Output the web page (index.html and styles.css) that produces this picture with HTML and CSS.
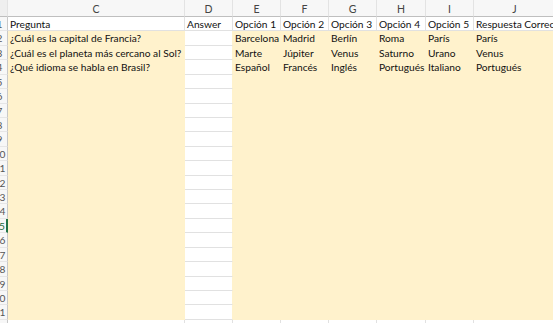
FILE: index.html
```html
<!DOCTYPE html>
<html lang="es">
<head>
  <meta charset="UTF-8" />
  <meta name="viewport" content="width=device-width, initial-scale=1.0"/>
  <title>Preguntas - Hoja 1</title>
  <link rel="stylesheet" href="styles.css">
</head>

<body>
  <!-- Hoja de cálculo -->
  <div class="sheet">
    <!-- Encabezados de columna -->
    <div class="row head">
      <div class="corner"></div>
      <div>C</div><div>D</div><div>E</div><div>F</div><div>G</div><div>H</div><div>I</div><div>J</div>
    </div>

    <div class="row">
      <div class="rh">1</div>
      <div>Pregunta</div><div>Answer</div><div>Opción 1</div><div>Opción 2</div><div>Opción 3</div><div>Opción 4</div><div>Opción 5</div><div>Respuesta Correcta</div>
    </div>
    <div class="row fill">
      <div class="rh">2</div>
      <div>¿Cuál es la capital de Francia?</div><div></div><div>Barcelona</div><div>Madrid</div><div>Berlín</div><div>Roma</div><div>París</div><div>París</div>
    </div>
    <div class="row fill">
      <div class="rh">3</div>
      <div>¿Cuál es el planeta más cercano al Sol?</div><div></div><div>Marte</div><div>Júpiter</div><div>Venus</div><div>Saturno</div><div>Urano</div><div>Venus</div>
    </div>
    <div class="row fill">
      <div class="rh">4</div>
      <div>¿Qué idioma se habla en Brasil?</div><div></div><div>Español</div><div>Francés</div><div>Inglés</div><div>Portugués</div><div>Italiano</div><div>Portugués</div>
    </div>
    <div class="row fill"><div class="rh">5</div><div></div><div></div><div></div><div></div><div></div><div></div><div></div><div></div></div>
    <div class="row fill"><div class="rh">6</div><div></div><div></div><div></div><div></div><div></div><div></div><div></div><div></div></div>
    <div class="row fill"><div class="rh">7</div><div></div><div></div><div></div><div></div><div></div><div></div><div></div><div></div></div>
    <div class="row fill"><div class="rh">8</div><div></div><div></div><div></div><div></div><div></div><div></div><div></div><div></div></div>
    <div class="row fill"><div class="rh">9</div><div></div><div></div><div></div><div></div><div></div><div></div><div></div><div></div></div>
    <div class="row fill"><div class="rh">10</div><div></div><div></div><div></div><div></div><div></div><div></div><div></div><div></div></div>
    <div class="row fill"><div class="rh">11</div><div></div><div></div><div></div><div></div><div></div><div></div><div></div><div></div></div>
    <div class="row fill"><div class="rh">12</div><div></div><div></div><div></div><div></div><div></div><div></div><div></div><div></div></div>
    <div class="row fill"><div class="rh">13</div><div></div><div></div><div></div><div></div><div></div><div></div><div></div><div></div></div>
    <div class="row fill"><div class="rh">14</div><div></div><div></div><div></div><div></div><div></div><div></div><div></div><div></div></div>
    <div class="row fill"><div class="rh active">15</div><div></div><div></div><div></div><div></div><div></div><div></div><div></div><div></div></div>
    <div class="row fill"><div class="rh">16</div><div></div><div></div><div></div><div></div><div></div><div></div><div></div><div></div></div>
    <div class="row fill"><div class="rh">17</div><div></div><div></div><div></div><div></div><div></div><div></div><div></div><div></div></div>
    <div class="row fill"><div class="rh">18</div><div></div><div></div><div></div><div></div><div></div><div></div><div></div><div></div></div>
    <div class="row fill"><div class="rh">19</div><div></div><div></div><div></div><div></div><div></div><div></div><div></div><div></div></div>
    <div class="row fill"><div class="rh">20</div><div></div><div></div><div></div><div></div><div></div><div></div><div></div><div></div></div>
    <div class="row fill"><div class="rh">21</div><div></div><div></div><div></div><div></div><div></div><div></div><div></div><div></div></div>
    <div class="row"><div class="rh">22</div><div></div><div></div><div></div><div></div><div></div><div></div><div></div><div></div></div>
  </div>
</body>
</html>
```

FILE: styles.css
```css
body {
  margin: 0;
  background: white;
  overflow: hidden;
  font-family: Lato, 'Liberation Sans', sans-serif;
  font-size: 10.2px;
  color: #111;
}

.sheet {
  display: grid;
  grid-template-columns: 15px 177px 48px 48px 48px 48px 49px 48px 82px;
  grid-template-rows: 17px repeat(22, 14.43px);
  margin-left: -7px;
  width: 570px;
}

.row {
  display: contents;
}

.row > div {
  box-sizing: border-box;
  border-right: 1px solid #e1e1e1;
  border-bottom: 1px solid #e1e1e1;
  padding-left: 2px;
  white-space: nowrap;
  overflow: visible;
  line-height: 14px;
}

.row > div:last-child {
  overflow: hidden;
}

/* encabezados de columna */
.head > div {
  background: #f7f7f7;
  border-right-color: #e3e3e3;
  border-bottom: 1px solid #bfbfbf;
  text-align: center;
  padding-left: 0;
  color: #444;
  line-height: 18px;
  font-size: 10.5px;
}

.head .corner {
  background: #efefef;
}

/* números de fila */
.rh {
  background: #f7f7f7;
  text-align: center;
  color: #555;
  border-right: 1px solid #c8c8c8 !important;
  border-bottom-color: #e6e6e6 !important;
  padding: 0 1px 0 0 !important;
}

.rh.active {
  color: #1d6b40;
  border-right: 2px solid #217346 !important;
}

/* celdas con relleno amarillo claro */
.fill > div {
  background: #fff2cc;
  border-color: #fff2cc;
}

.fill > div:nth-child(3) {
  background: white;
  border-bottom-color: #e1e1e1;
  border-right-color: #fff2cc;
}

.fill > .rh {
  background: #f7f7f7;
}
```
